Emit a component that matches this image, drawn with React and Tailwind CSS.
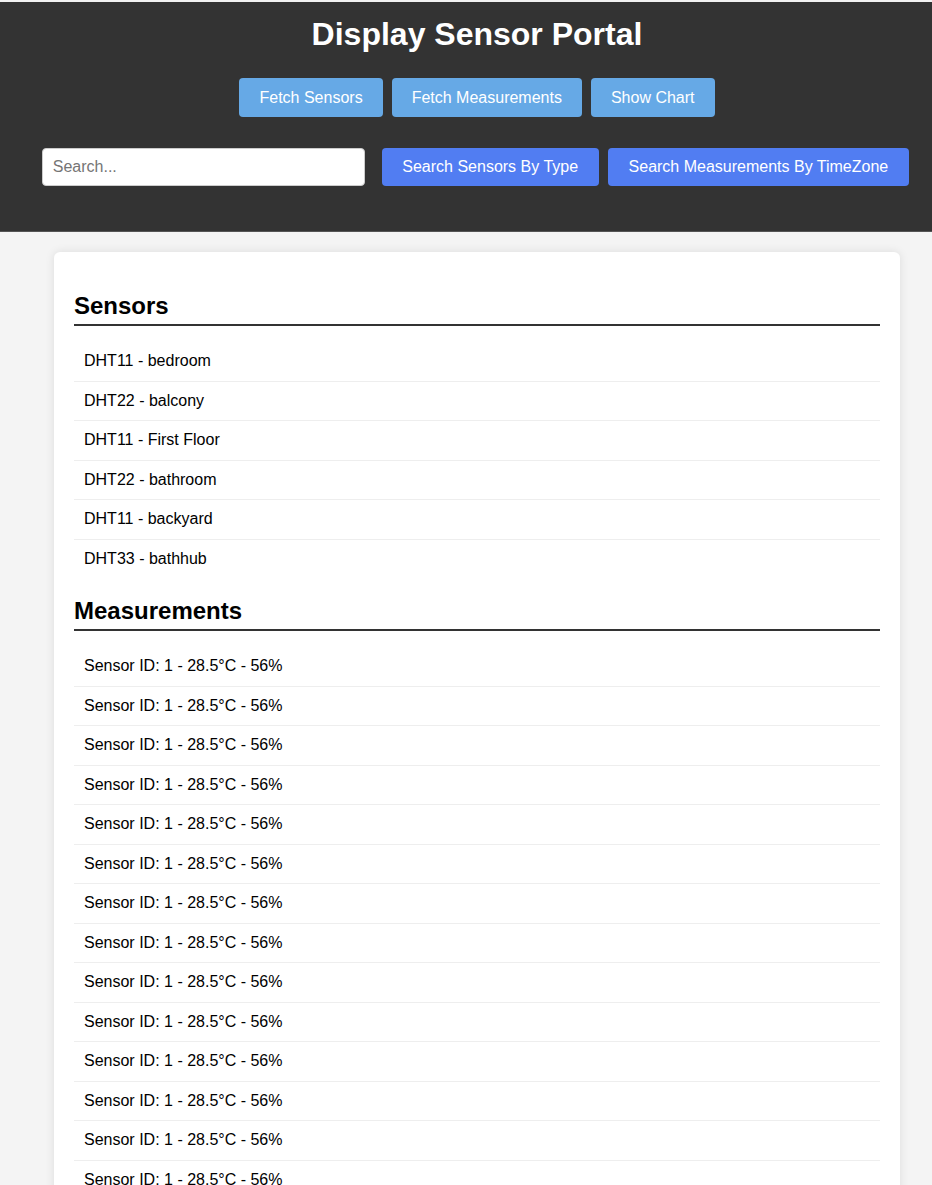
import React from 'react';

const sensors = [
  'DHT11 - bedroom',
  'DHT22 - balcony',
  'DHT11 - First Floor',
  'DHT22 - bathroom',
  'DHT11 - backyard',
  'DHT33 - bathhub',
];

const measurements = Array.from({ length: 18 }, () => 'Sensor ID: 1 - 28.5°C - 56%');

const Section = ({ title, items, first }) => (
  <div>
    <h2 className={`${first ? 'mt-[20px]' : 'mt-[19px]'} mb-[16px] pb-[4px] border-b-2 border-[#333] text-[24px] leading-[28px] font-bold text-black`}>
      {title}
    </h2>
    <ul>
      {items.map((item, i) => (
        <li key={i} className="p-[10px] border-b border-[#eee] last:border-b-0 text-[16px] leading-[18.5px] text-black">
          {item}
        </li>
      ))}
    </ul>
  </div>
);

export default function App() {
  return (
    <div className="w-full min-h-screen overflow-x-hidden bg-[#f4f4f4]" style={{ fontFamily: '"Liberation Sans", Arial, sans-serif' }}>
      <div className="w-[954px]">
        {/* Header */}
        <div className="h-[2px] bg-[#f2f2f2]"></div>
        <header className="bg-[#333] h-[230px] border-b border-[#555] pt-[14px] flex flex-col items-center">
          <h1 className="text-white text-[32px] leading-[37px] font-bold">Display Sensor Portal</h1>

          <div className="mt-[25px] flex gap-[9px]">
            <button className="h-[39px] px-[20px] rounded-[4px] bg-[#66a9e6] text-white text-[16px]">Fetch Sensors</button>
            <button className="h-[39px] px-[20px] rounded-[4px] bg-[#66a9e6] text-white text-[16px]">Fetch Measurements</button>
            <button className="h-[39px] px-[20px] rounded-[4px] bg-[#66a9e6] text-white text-[16px]">Show Chart</button>
          </div>

          <div className="mt-[31px] mr-[3px] flex items-center">
            <input
              type="text"
              placeholder="Search..."
              className="w-[323px] h-[38px] px-[10px] rounded-[4px] bg-white text-[16px] text-black placeholder:text-[#757575] outline-none border border-[#ccc]"
            />
            <button className="ml-[17px] h-[38px] px-[20.5px] rounded-[4px] bg-[#517df2] text-white text-[16px]">Search Sensors By Type</button>
            <button className="ml-[9px] h-[38px] px-[21px] rounded-[4px] bg-[#517df2] text-white text-[16px]">Search Measurements By TimeZone</button>
          </div>
        </header>

        {/* Content card */}
        <div className="pt-[20px] pb-[20px]">
          <div className="w-[846px] mx-auto bg-white rounded-[6px] shadow-[0_0_10px_rgba(0,0,0,0.1)] px-[20px] pt-[20px] pb-[20px]">
            <Section title="Sensors" items={sensors} first />
            <Section title="Measurements" items={measurements} />
          </div>
        </div>
      </div>
    </div>
  );
}
